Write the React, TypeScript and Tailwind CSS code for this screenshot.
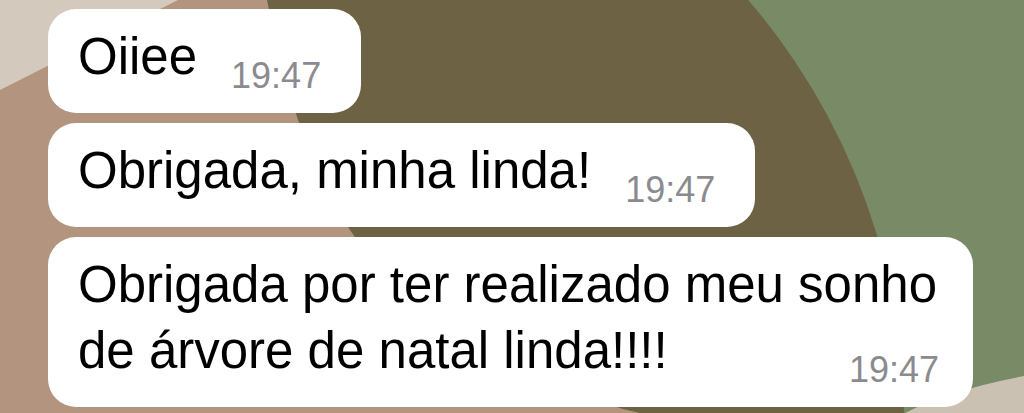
import type { ReactNode } from "react";

const TIME = "19:47";

function Wallpaper() {
  return (
    <svg
      className="absolute inset-0 h-full w-full"
      viewBox="0 0 1024 413"
      preserveAspectRatio="none"
      aria-hidden="true"
    >
      <rect width="1024" height="413" fill="#798a67" />
      <circle cx="260" cy="420" r="644" fill="#6d6243" />
      <path
        d="M0 0 L267 0 C285 90 310 170 350 230 C420 330 540 390 640 413 L0 413 Z"
        fill="#b3947e"
      />
      <path d="M0 0 L178 0 L0 90 Z" fill="#d3c9bc" />
      <path d="M1024 376 Q950 390 905 413 L1024 413 Z" fill="#cbc1b2" />
    </svg>
  );
}

function Bubble({ children }: { children: ReactNode }) {
  return (
    <div className="inline-flex items-end rounded-[28px] bg-white pb-[17px] pl-[30px] pr-[40px] pt-[15px]">
      <span className="mb-[6px] whitespace-nowrap text-[51px] leading-[66px] text-black">
        {children}
      </span>
      <span className="ml-[34px] shrink-0 text-[36px] leading-[40px] text-[#8b8b8f]">
        {TIME}
      </span>
    </div>
  );
}

// time floats into the free space at the end of the last line
function LongBubble({ parts }: { parts: string[] }) {
  return (
    <div className="flex w-[925px] flex-col rounded-[28px] bg-white pb-[17px] pl-[30px] pr-[34px] pt-[15px]">
      <p className="w-[861px] text-[51px] leading-[66px] text-black">
        {parts.map((part) => (
          <span key={part}>{part}</span>
        ))}
        <span className="float-right mt-[32px] text-[36px] leading-[40px] text-[#8b8b8f]">
          {TIME}
        </span>
      </p>
    </div>
  );
}

export default function App() {
  return (
    <div
      className="relative h-[413px] w-[1024px] overflow-hidden"
      style={{ fontFamily: '"Liberation Sans", Arial, sans-serif' }}
    >
      <Wallpaper />
      <div className="relative flex flex-col items-start gap-[10px] pl-[48px] pt-[9px]">
        <Bubble>Oiiee</Bubble>
        <Bubble>Obrigada, minha linda!</Bubble>
        <LongBubble
          parts={["Obrigada por ter realizado meu sonho ", "de árvore de natal linda!!!!"]}
        />
      </div>
    </div>
  );
}
